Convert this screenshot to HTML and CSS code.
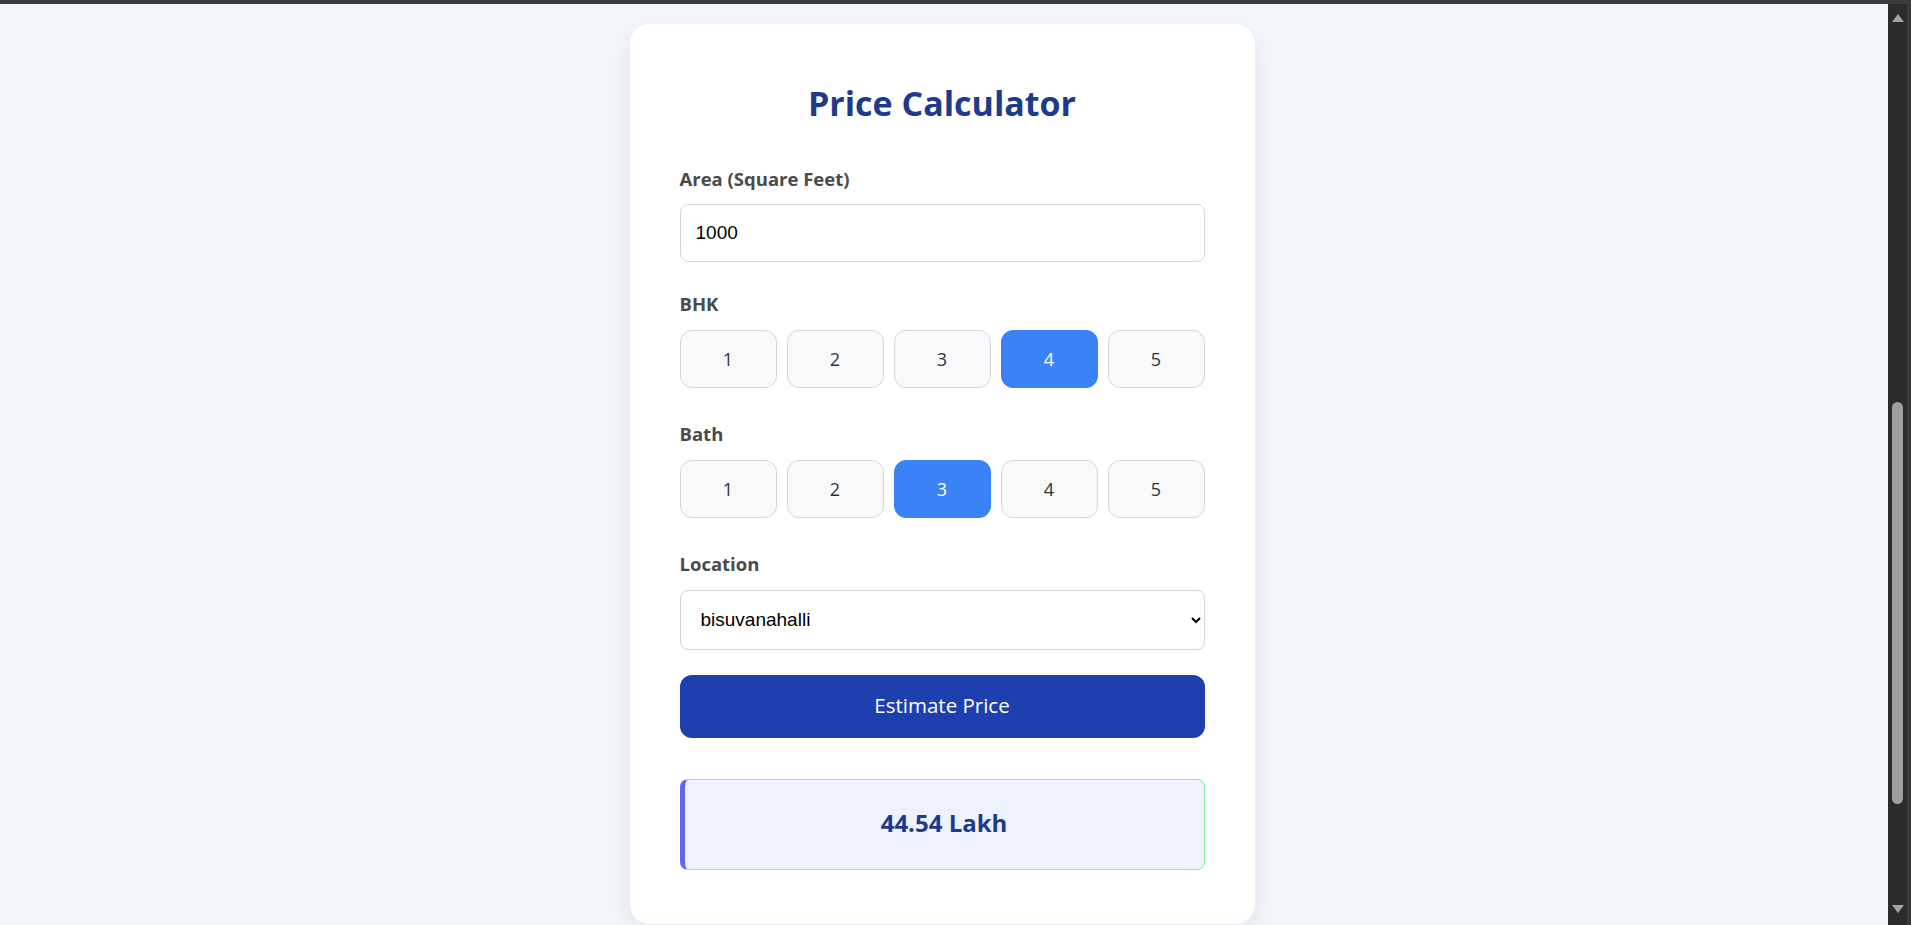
FILE: index.html
```html
<!DOCTYPE html>
<html lang="en">
<head>
<meta charset="utf-8">
<title>Price Calculator</title>
<link rel="stylesheet" href="styles.css">
</head>
<body>
<div class="frame-top"></div>
<div class="window">
  <main class="page">
    <section class="card">
      <h2 class="title">Price Calculator</h2>

      <div class="group group-input">
        <label class="label" for="area">Area (Square Feet)</label>
        <input class="field" id="area" type="text" value="1000">
      </div>

      <div class="group group-choice">
        <div class="label">BHK</div>
        <div class="choices">
          <button class="choice">1</button>
          <button class="choice">2</button>
          <button class="choice">3</button>
          <button class="choice active">4</button>
          <button class="choice">5</button>
        </div>
      </div>

      <div class="group group-choice">
        <div class="label">Bath</div>
        <div class="choices">
          <button class="choice">1</button>
          <button class="choice">2</button>
          <button class="choice active">3</button>
          <button class="choice">4</button>
          <button class="choice">5</button>
        </div>
      </div>

      <div class="group group-select">
        <label class="label" for="loc">Location</label>
        <select class="field select" id="loc">
          <option>bisuvanahalli</option>
        </select>
      </div>

      <button class="estimate">Estimate Price</button>

      <div class="result">44.54 Lakh</div>
    </section>
  </main>
  <div class="scrollbar">
    <div class="sb-arrow sb-up"></div>
    <div class="sb-track"><div class="sb-thumb"></div></div>
    <div class="sb-arrow sb-down"></div>
  </div>
</div>
</body>
</html>
```

FILE: styles.css
```css
* { box-sizing: border-box; }

html, body {
  margin: 0;
  height: 100%;
  overflow: hidden;
}

body {
  display: flex;
  flex-direction: column;
  background: #f2f5fa;
  font-family: "Open Sans", "Noto Sans", sans-serif;
}

.frame-top {
  height: 4px;
  flex: 0 0 4px;
  background: #3c3c3c;
}

.window {
  flex: 1;
  display: flex;
  min-height: 0;
}

.page {
  flex: 1;
  display: flex;
  justify-content: center;
  align-items: flex-start;
  padding: 20px 4px 0 0;
}

.card {
  width: 625px;
  background: #ffffff;
  border-radius: 20px;
  box-shadow: 0 10px 30px rgba(30, 50, 90, 0.07);
  padding: 59px 50px 54px;
}

.title {
  margin: 0 0 42px;
  text-align: center;
  font-size: 34px;
  line-height: 1.2;
  font-weight: 700;
  color: #1e3a8a;
}

.label {
  display: block;
  font-size: 18.5px;
  line-height: 25.5px;
  font-weight: 700;
  color: #4a4a4a;
  margin-bottom: 13px;
}

.group-input { margin-bottom: 29px; }
.group-choice { margin-bottom: 33.5px; }
.group-select { margin-bottom: 25px; }

.field {
  display: block;
  width: 100%;
  height: 58px;
  border: 1px solid #d4d6dc;
  border-radius: 8px;
  padding: 0 15px;
  background: #ffffff;
  font-family: "Liberation Sans", Arial, sans-serif;
  font-size: 19px;
  color: #000000;
  outline: none;
}

.select {
  height: 60px;
  padding: 0 12px 0 16px;
}

.choices {
  display: flex;
  gap: 10px;
}

.choice {
  flex: 1;
  height: 58px;
  border: 1px solid #d4d6dc;
  border-radius: 12px;
  background: #f8f9fb;
  font-family: "Open Sans", "Noto Sans", sans-serif;
  font-size: 18px;
  color: #333333;
  padding: 0;
}

.choice.active {
  background: #3b82f6;
  border-color: #3b82f6;
  color: #ffffff;
}

.estimate {
  display: block;
  width: 100%;
  height: 63px;
  border: none;
  border-radius: 12px;
  background: #1e40af;
  color: #ffffff;
  font-family: "Open Sans", "Noto Sans", sans-serif;
  font-size: 20.5px;
  padding: 0 0 3px;
  margin-bottom: 41px;
}

.result {
  height: 91px;
  display: flex;
  align-items: center;
  justify-content: center;
  padding-bottom: 3px;
  background: #eef2fd;
  border: 1px solid #86efac;
  border-left: 5px solid #6366f1;
  border-radius: 8px;
  font-size: 24px;
  font-weight: 700;
  color: #1e3a8a;
}

/* fake browser scrollbar */
.scrollbar {
  width: 23px;
  flex: 0 0 23px;
  background: #2b2b2b;
  border-right: 4px solid #393939;
  display: flex;
  flex-direction: column;
  align-items: center;
}

.sb-arrow {
  width: 0;
  height: 0;
  border-left: 6px solid transparent;
  border-right: 6px solid transparent;
}

.sb-up {
  margin-top: 10px;
  border-bottom: 8px solid #a3a3a3;
}

.sb-down {
  margin-bottom: 12px;
  border-top: 8px solid #a3a3a3;
}

.sb-track {
  flex: 1;
  width: 100%;
  display: flex;
  justify-content: center;
  padding-top: 380px;
}

.sb-thumb {
  width: 11px;
  height: 402px;
  border-radius: 6px;
  background: #9f9f9f;
}
```
